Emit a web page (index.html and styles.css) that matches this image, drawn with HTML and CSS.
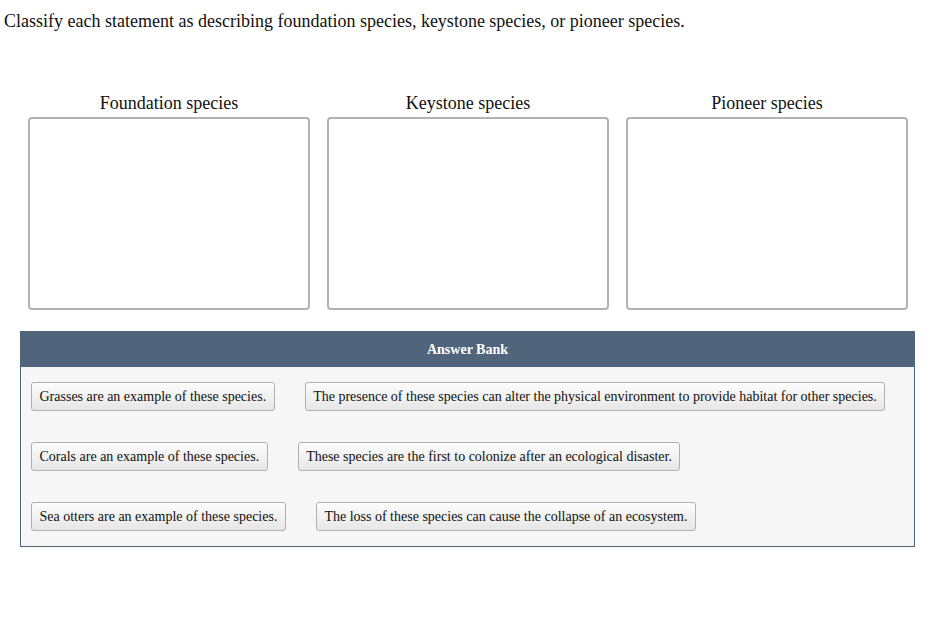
FILE: index.html
```html
<!DOCTYPE html>
<html lang="en">
<head>
    <meta charset="UTF-8">
    <title>Classify species</title>
    <link rel="stylesheet" href="styles.css">
</head>
<body>
    <p class="prompt">Classify each statement as describing foundation species, keystone species, or pioneer species.</p>

    <div class="bins">
        <div class="bin">
            <div class="bin-label">Foundation species</div>
            <div class="bin-box"></div>
        </div>
        <div class="bin">
            <div class="bin-label">Keystone species</div>
            <div class="bin-box"></div>
        </div>
        <div class="bin">
            <div class="bin-label">Pioneer species</div>
            <div class="bin-box"></div>
        </div>
    </div>

    <div class="bank">
        <div class="bank-header">Answer Bank</div>
        <div class="bank-items">
            <div class="chip">Grasses are an example of these species.</div>
            <div class="chip">The presence of these species can alter the physical environment to provide habitat for other species.</div>
            <div class="chip">Corals are an example of these species.</div>
            <div class="chip">These species are the first to colonize after an ecological disaster.</div>
            <div class="chip">Sea otters are an example of these species.</div>
            <div class="chip">The loss of these species can cause the collapse of an ecosystem.</div>
        </div>
    </div>
</body>
</html>
```

FILE: styles.css
```css
body {
    font-family: 'Liberation Serif', 'Times New Roman', serif;
    color: #111;
    background: #fff;
    margin: 0;
    padding: 0 4px;
}
.prompt {
    margin: 11px 0 0;
    font-size: 18px;
    line-height: 21px;
}
.bins {
    display: flex;
    gap: 17px;
    margin: 61px 0 0 24px;
    width: 880px;
}
.bin {
    flex: 1;
}
.bin-label {
    text-align: center;
    font-size: 18px;
    line-height: 21px;
    margin-bottom: 3px;
}
.bin-box {
    height: 189px;
    border: 2px solid #b3b3b3;
    border-radius: 4px;
    background: #fff;
}
.bank {
    margin: 21px 0 0 16px;
    width: 893px;
    border: 1px solid #50657b;
    background: #f6f6f6;
}
.bank-header {
    background: #50657b;
    color: #fff;
    font-weight: bold;
    font-size: 14px;
    height: 35px;
    line-height: 35px;
    text-align: center;
}
.bank-items {
    display: flex;
    flex-wrap: wrap;
    column-gap: 30px;
    row-gap: 31px;
    padding: 15px 10px 15px;
}
.chip {
    font-size: 14px;
    line-height: 27px;
    padding: 0 7.5px;
    border: 1px solid #b0b0b0;
    border-radius: 3px;
    background: linear-gradient(#fdfdfd, #e6e6e6);
    white-space: nowrap;
}
```
